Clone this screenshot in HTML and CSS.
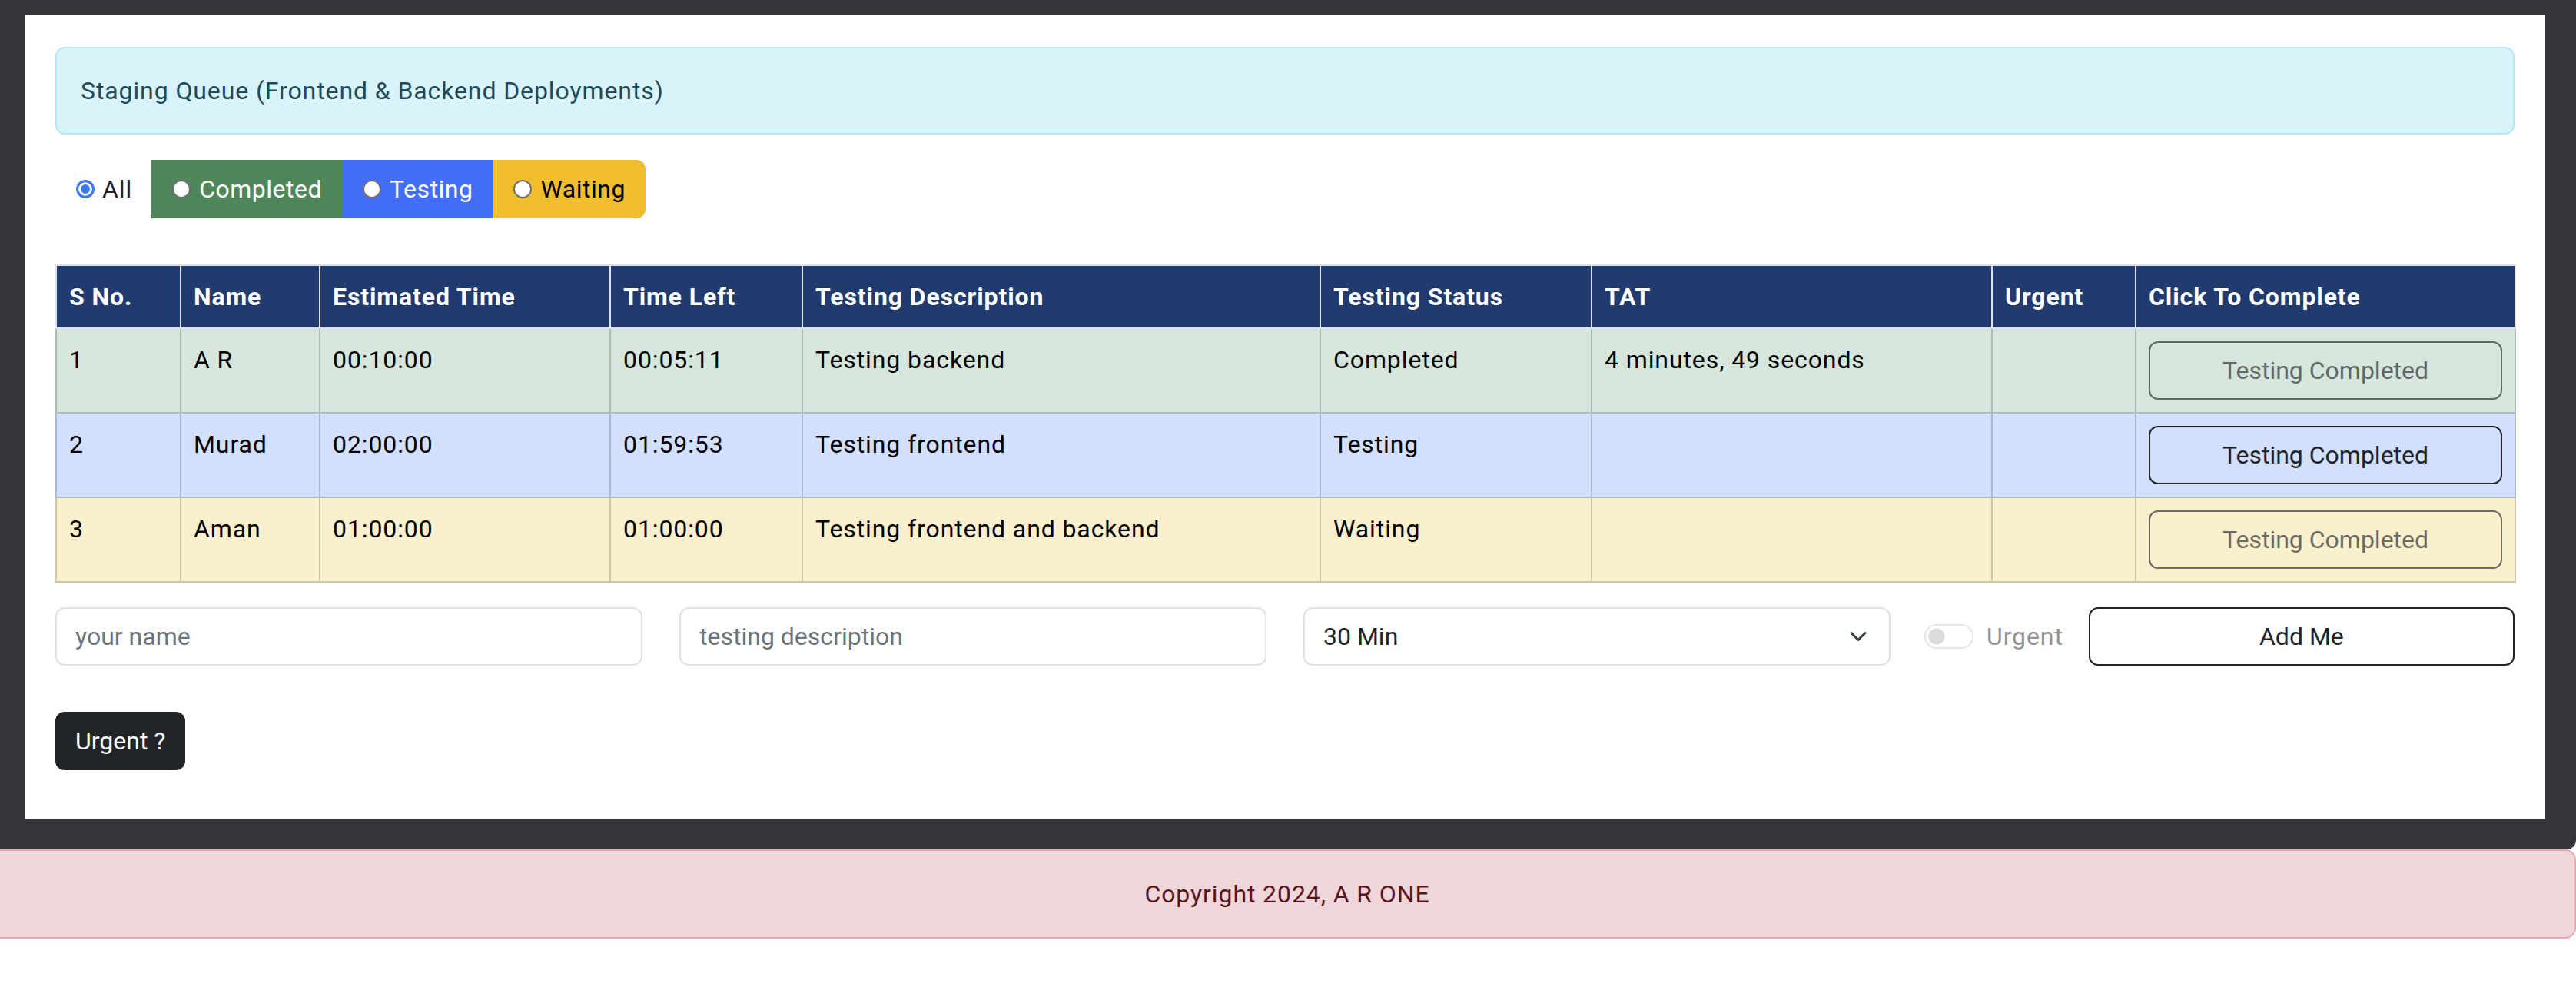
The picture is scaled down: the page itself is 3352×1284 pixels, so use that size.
FILE: index.html
```html
<!DOCTYPE html>
<html lang="en">
<head>
<meta charset="utf-8">
<title>Staging Queue</title>
<link rel="stylesheet" href="styles.css">
</head>
<body>
<div class="shell">
  <main class="panel">
    <div class="alert-info">Staging Queue (Frontend &amp; Backend Deployments)</div>

    <div class="filters">
      <label class="opt-all"><input class="radio" type="radio" name="filter" checked><span>All</span></label>
      <div class="seg">
        <label class="seg-item seg-completed"><input class="radio" type="radio" name="filter"><span>Completed</span></label>
        <label class="seg-item seg-testing"><input class="radio" type="radio" name="filter"><span>Testing</span></label>
        <label class="seg-item seg-waiting"><input class="radio" type="radio" name="filter"><span>Waiting</span></label>
      </div>
    </div>

    <table class="queue">
      <colgroup>
        <col class="c-sno"><col class="c-name"><col class="c-est"><col class="c-left"><col class="c-desc"><col class="c-status"><col class="c-tat"><col class="c-urgent"><col class="c-action">
      </colgroup>
      <thead>
        <tr>
          <th>S No.</th><th>Name</th><th>Estimated Time</th><th>Time Left</th><th>Testing Description</th><th>Testing Status</th><th>TAT</th><th>Urgent</th><th>Click To Complete</th>
        </tr>
      </thead>
      <tbody>
        <tr class="row-done">
          <td>1</td><td>A R</td><td>00:10:00</td><td>00:05:11</td><td>Testing backend</td><td>Completed</td><td>4 minutes, 49 seconds</td><td></td>
          <td><button class="btn-complete" type="button" disabled>Testing Completed</button></td>
        </tr>
        <tr class="row-testing">
          <td>2</td><td>Murad</td><td>02:00:00</td><td>01:59:53</td><td>Testing frontend</td><td>Testing</td><td></td><td></td>
          <td><button class="btn-complete" type="button">Testing Completed</button></td>
        </tr>
        <tr class="row-waiting">
          <td>3</td><td>Aman</td><td>01:00:00</td><td>01:00:00</td><td>Testing frontend and backend</td><td>Waiting</td><td></td><td></td>
          <td><button class="btn-complete" type="button" disabled>Testing Completed</button></td>
        </tr>
      </tbody>
    </table>

    <form class="entry">
      <input class="field" type="text" placeholder="your name">
      <input class="field" type="text" placeholder="testing description">
      <select class="field select">
        <option>30 Min</option>
        <option>1 Hour</option>
        <option>2 Hours</option>
      </select>
      <div class="urgent-col">
        <label class="switch-wrap"><input class="switch" type="checkbox" disabled><span class="switch-label">Urgent</span></label>
        <button class="btn-add" type="button">Add Me</button>
      </div>
    </form>

    <button class="btn-urgent" type="button">Urgent ?</button>
  </main>
</div>
<footer class="footer">Copyright 2024, A R ONE</footer>
</body>
</html>
```

FILE: styles.css
```css
* {
  box-sizing: border-box;
}

html,
body {
  margin: 0;
  padding: 0;
  background: #ffffff;
}

body {
  font-family: Roboto, "Liberation Sans", Arial, sans-serif;
  font-size: 32px;
  line-height: 1.5;
  letter-spacing: 0.9px;
  color: #212529;
}

button,
input,
select {
  letter-spacing: normal;
}

.shell {
  background: #343539;
  padding: 20px 40px 39px 32px;
  border-bottom-right-radius: 12px;
}

.panel {
  display: block;
  background: #ffffff;
  padding: 41px 40px 64px 40px;
}

.alert-info {
  background: #d9f3fb;
  border: 2px solid #b6e7f6;
  border-radius: 12px;
  padding: 31px 31px;
  color: #1f4b57;
}

/* filter radios */
.filters {
  display: flex;
  align-items: center;
  margin-top: 33px;
  height: 76px;
  padding-left: 27px;
}

.opt-all {
  display: flex;
  align-items: center;
  gap: 10px;
  margin-right: 25px;
}

.radio {
  appearance: none;
  -webkit-appearance: none;
  margin: 0;
  width: 24px;
  height: 24px;
  border-radius: 50%;
  border: 2px solid #707070;
  background: #ffffff;
  flex: none;
}

.radio:checked {
  border: 3px solid #3f78f2;
  background: #3f78f2;
  box-shadow: inset 0 0 0 3px #ffffff;
}

.seg {
  display: flex;
  height: 76px;
}

.seg-item {
  display: flex;
  align-items: center;
  gap: 11px;
  padding: 0 26px 0 27px;
  color: #ffffff;
  letter-spacing: 0.5px;
}

.seg-completed {
  background: #4f875a;
}

.seg-testing {
  background: #426ef9;
}

.seg-waiting {
  background: #f0bd2f;
  color: #000000;
  border-radius: 0 12px 12px 0;
}

/* table */
.queue {
  width: 100%;
  border-collapse: collapse;
  table-layout: fixed;
  margin-top: 60px;
}

.c-sno { width: 162px; }
.c-name { width: 181px; }
.c-est { width: 378px; }
.c-left { width: 250px; }
.c-desc { width: 674px; }
.c-status { width: 353px; }
.c-tat { width: 521px; }
.c-urgent { width: 187px; }
.c-action { width: 494px; }

.queue th {
  background: #223b6e;
  color: #ffffff;
  font-weight: 700;
  text-align: left;
  padding: 16px;
  border: 2px solid #dee2e6;
  vertical-align: top;
  white-space: nowrap;
}

.queue td {
  padding: 16px;
  border: 2px solid;
  vertical-align: top;
  color: #000000;
}

.row-done td {
  background: #d6e6dc;
  border-color: #afbeb5;
}

.row-testing td {
  background: #d2e0fd;
  border-color: #aab8d0;
}

.row-waiting td {
  background: #fbf0cd;
  border-color: #d0c7a9;
}

.btn-complete {
  display: block;
  width: 100%;
  height: 76px;
  font: inherit;
  color: #212529;
  background: transparent;
  border: 2px solid #212529;
  border-radius: 12px;
  padding: 12px 24px;
  text-align: center;
}

.btn-complete:disabled {
  opacity: 0.65;
}

/* entry form */
.entry {
  display: grid;
  grid-template-columns: repeat(4, 1fr);
  column-gap: 48px;
  margin-top: 32px;
}

.field {
  display: block;
  width: 100%;
  height: 76px;
  margin: 0;
  font: inherit;
  color: #212529;
  padding: 12px 24px;
  border: 2px solid #dee2e6;
  border-radius: 12px;
  background-color: #ffffff;
}

.field::placeholder {
  color: #6c757d;
}

.select {
  appearance: none;
  -webkit-appearance: none;
  padding-right: 72px;
  background-image: url("data:image/svg+xml,%3csvg xmlns='http://www.w3.org/2000/svg' viewBox='0 0 16 16'%3e%3cpath fill='none' stroke='%23343a40' stroke-linecap='round' stroke-linejoin='round' stroke-width='2' d='m2 5 6 6 6-6'/%3e%3c/svg%3e");
  background-repeat: no-repeat;
  background-position: right 24px center;
  background-size: 32px 24px;
}

.urgent-col {
  display: flex;
  align-items: center;
}

.switch-wrap {
  display: flex;
  align-items: center;
  gap: 17px;
  margin-left: -4px;
  opacity: 0.5;
  flex: none;
}

.switch {
  appearance: none;
  -webkit-appearance: none;
  margin: 0;
  width: 64px;
  height: 32px;
  border: 2px solid rgba(0, 0, 0, 0.2);
  border-radius: 32px;
  background: #ffffff radial-gradient(circle at 14px 50%, rgba(0, 0, 0, 0.28) 10px, transparent 11px);
  flex: none;
}

.switch-label {
  color: #212529;
}

.btn-add {
  flex: 1;
  margin-left: 33px;
  height: 76px;
  font: inherit;
  color: #212529;
  background: transparent;
  border: 2px solid #212529;
  border-radius: 12px;
  padding: 12px 24px;
}

.btn-urgent {
  display: block;
  margin-top: 60px;
  height: 76px;
  font: inherit;
  color: #ffffff;
  background: #212529;
  border: 2px solid #212529;
  border-radius: 12px;
  padding: 12px 24px;
}

/* footer */
.footer {
  height: 116px;
  background: #efd6d9;
  border: 2px solid #e3a9b0;
  border-left: 0;
  border-radius: 0 14px 14px 0;
  padding: 32px;
  text-align: center;
  color: #58151c;
}
```
